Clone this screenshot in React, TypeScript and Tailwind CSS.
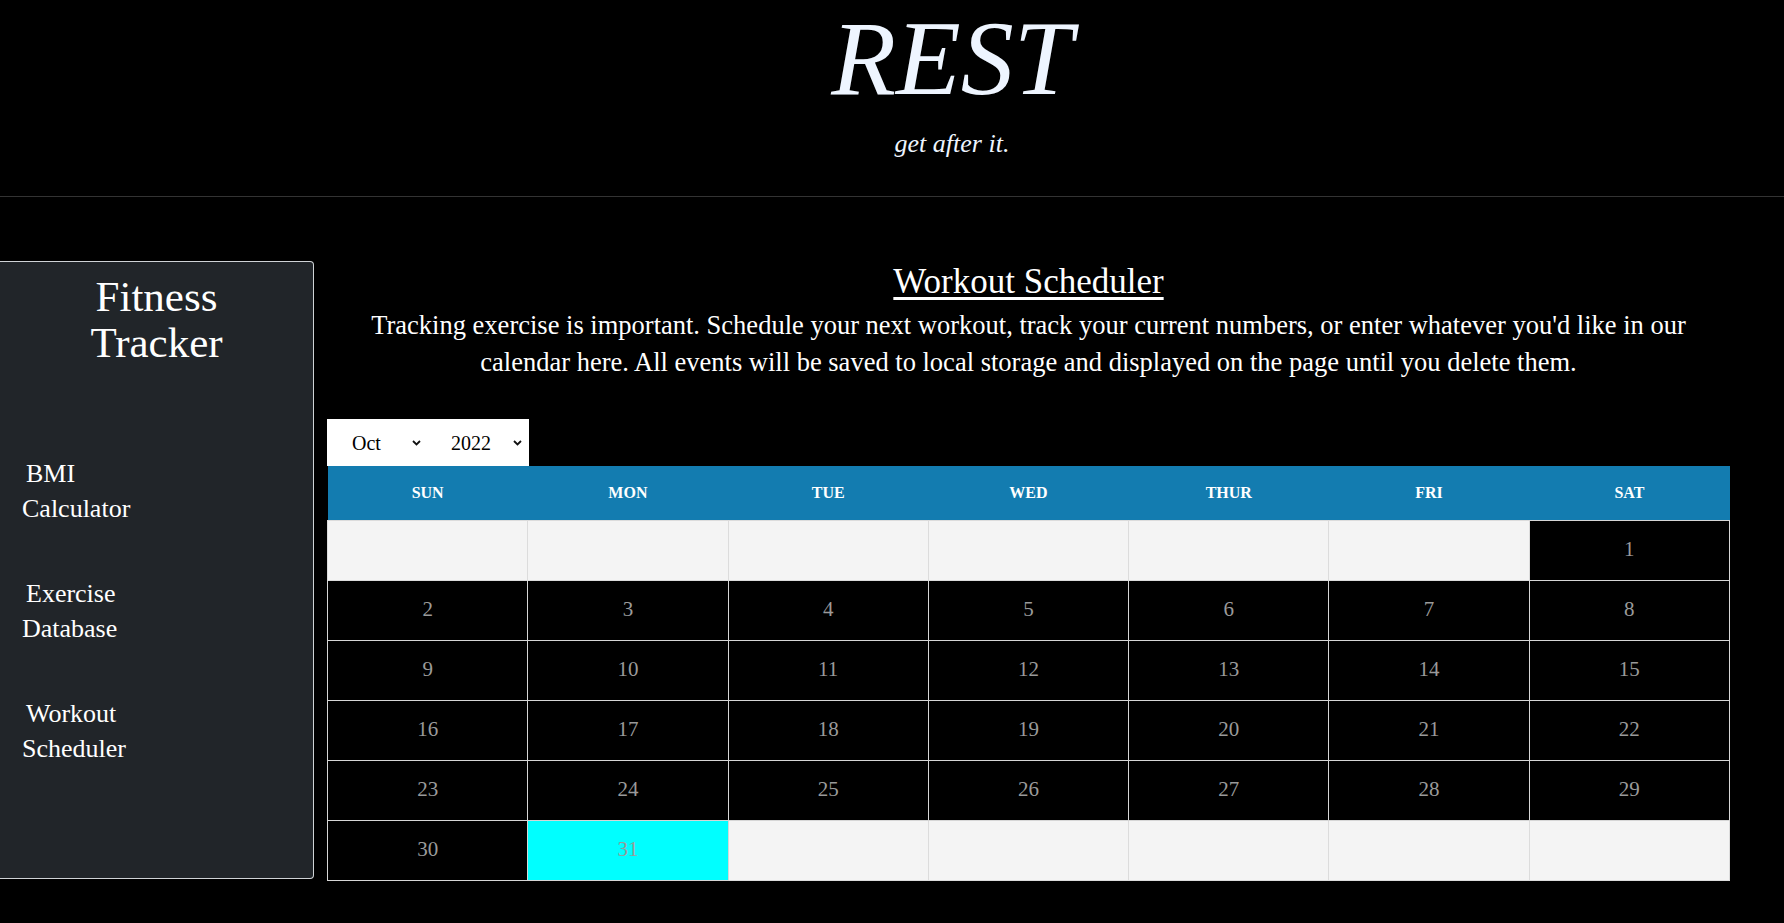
import React from 'react';

const days = ['SUN', 'MON', 'TUE', 'WED', 'THUR', 'FRI', 'SAT'];

// October 2022 starts on a Saturday
const buildWeeks = () => {
  const cells: (number | null)[] = [];
  for (let i = 0; i < 6; i++) cells.push(null);
  for (let d = 1; d <= 31; d++) cells.push(d);
  while (cells.length % 7 !== 0) cells.push(null);
  const weeks: (number | null)[][] = [];
  for (let i = 0; i < cells.length; i += 7) weeks.push(cells.slice(i, i + 7));
  return weeks;
};

const Chevron: React.FC = () => (
  <svg
    className="pointer-events-none absolute right-[7px] top-1/2 -translate-y-1/2"
    width="9"
    height="6"
    viewBox="0 0 9 6"
  >
    <path d="M1 1 L4.5 4.5 L8 1" fill="none" stroke="#111" strokeWidth="1.8" />
  </svg>
);

const Sidebar: React.FC = () => (
  <aside className="w-[314px] h-[618px] shrink-0 bg-[#212529] border border-[#cfd3d6] rounded-r-[4px] border-l-0 pt-[12px] text-white">
    <h1 className="text-center text-[43px] leading-[46px]">
      Fitness
      <br />
      Tracker
    </h1>
    <nav className="mt-[90px] pl-[22px] flex flex-col gap-[50px] text-[26px] leading-[35px]">
      <a className="indent-1 block">
        BMI
        <br />
        Calculator
      </a>
      <a className="indent-1 block">
        Exercise
        <br />
        Database
      </a>
      <a className="indent-1 block">
        Workout
        <br />
        Scheduler
      </a>
    </nav>
  </aside>
);

const Calendar: React.FC = () => {
  const weeks = buildWeeks();
  return (
    <div>
      <div className="flex bg-white w-[202px] h-[47px] text-[20px] text-black">
        <div className="relative w-[101px]">
          <select
            defaultValue="Oct"
            className="appearance-none w-full h-full bg-white pl-[25px] outline-none"
          >
            <option>Oct</option>
          </select>
          <Chevron />
        </div>
        <div className="relative w-[101px]">
          <select
            defaultValue="2022"
            className="appearance-none w-full h-full bg-white pl-[23px] outline-none"
          >
            <option>2022</option>
          </select>
          <Chevron />
        </div>
      </div>
      <table className="w-full border-collapse table-fixed">
        <thead>
          <tr className="bg-[#137cb0] h-[54px]">
            {days.map((d) => (
              <th key={d} className="text-white font-bold text-[16px]">
                {d}
              </th>
            ))}
          </tr>
        </thead>
        <tbody>
          {weeks.map((week, wi) => (
            <tr key={wi} className="h-[60px]">
              {week.map((day, di) =>
                day === null ? (
                  <td key={di} className="bg-[#f4f4f4] border border-[#dcdcdc]" />
                ) : (
                  <td
                    key={di}
                    className={
                      day === 31
                        ? 'bg-[#00ffff] border border-[#d6d6d6] text-center text-[21px] text-[#9a9a9a]'
                        : 'bg-black border border-[#d6d6d6] text-center text-[21px] text-[#9a9a9a]'
                    }
                  >
                    {day}
                  </td>
                )
              )}
            </tr>
          ))}
        </tbody>
      </table>
    </div>
  );
};

const App: React.FC = () => {
  return (
    <div
      className="min-h-[923px] bg-black text-white"
      style={{ fontFamily: '"Liberation Serif", "Times New Roman", serif' }}
    >
      {/* Header */}
      <header className="text-center border-b border-[#333] pt-[6px] pb-[39px] pl-[120px] text-[#eef5ff]">
        <div className="italic text-[106px] leading-none">REST</div>
        <div className="italic text-[26px] leading-none mt-[19px]">get after it.</div>
      </header>

      {/* Body */}
      <div className="flex items-start mt-[64px]">
        <Sidebar />
        <main className="flex-1 ml-[13px] mr-[54px]">
          <h2 className="text-center text-[35px] leading-[41px] underline underline-offset-[4px]">
            Workout Scheduler
          </h2>
          <p className="text-center text-[26.5px] leading-[37px] mt-[5px]">
            Tracking exercise is important. Schedule your next workout, track your current numbers, or enter whatever you'd like in our
            <br />
            calendar here. All events will be saved to local storage and displayed on the page until you delete them.
          </p>
          <div className="mt-[38px]">
            <Calendar />
          </div>
        </main>
      </div>
    </div>
  );
};

export default App;
